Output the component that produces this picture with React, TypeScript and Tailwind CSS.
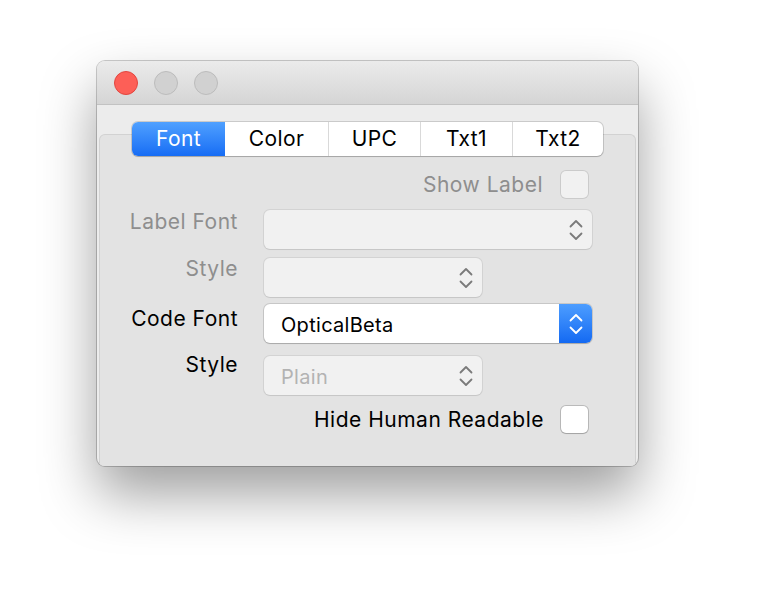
import React from 'react';

const font = { fontFamily: 'Inter, "Noto Sans", sans-serif' };

const Chevrons: React.FC<{ color: string }> = ({ color }) => (
  <svg width="16" height="24" viewBox="0 0 16 24" fill="none">
    <path d="M2.5 8.5 L8 3 L13.5 8.5" stroke={color} strokeWidth="1.8" strokeLinecap="round" strokeLinejoin="round" />
    <path d="M2.5 15.5 L8 21 L13.5 15.5" stroke={color} strokeWidth="1.8" strokeLinecap="round" strokeLinejoin="round" />
  </svg>
);

const Popup: React.FC<{ width: string; value?: string; active?: boolean }> = ({ width, value, active }) => {
  if (active) {
    return (
      <div className={`${width} h-[39px] flex rounded-[6px] bg-white shadow-[0_0_0_1px_rgba(0,0,0,0.12),0_1px_1px_rgba(0,0,0,0.15)] overflow-hidden`}>
        <div className="flex-1 flex items-center pl-[17px] pt-[2px] text-[20px] tracking-[0.3px] text-black">{value}</div>
        <div className="w-[33px] flex items-center justify-center bg-gradient-to-b from-[#4c9dff] to-[#1369f2]">
          <Chevrons color="#ffffff" />
        </div>
      </div>
    );
  }
  return (
    <div className={`${width} h-[39px] flex items-center rounded-[6px] bg-[#f1f1f1] shadow-[0_0_0_1px_rgba(0,0,0,0.07),0_1px_1px_rgba(0,0,0,0.06)]`}>
      <div className="flex-1 pl-[17px] pt-[2px] text-[20px] tracking-[0.3px] text-[#b3b3b3]">{value}</div>
      <div className="w-[33px] flex items-center justify-center">
        <Chevrons color="#7a7a7a" />
      </div>
    </div>
  );
};

const Checkbox: React.FC<{ disabled?: boolean }> = ({ disabled }) => (
  <div
    className={`w-[27px] h-[27px] rounded-[5px] ${
      disabled
        ? 'bg-[#f1f1f1] shadow-[0_0_0_1px_rgba(0,0,0,0.1)]'
        : 'bg-white shadow-[0_0_0_1px_rgba(0,0,0,0.18),0_1px_1px_rgba(0,0,0,0.12)]'
    }`}
  />
);

const tabs = [
  { name: 'Font', w: 'w-[93px]' },
  { name: 'Color', w: 'w-[103px]' },
  { name: 'UPC', w: 'w-[92px]' },
  { name: 'Txt1', w: 'w-[92px]' },
  { name: 'Txt2', w: 'w-[91px]' },
];

const FormRow: React.FC<{ label: string; dim?: boolean; children: React.ReactNode; className?: string; labelClass?: string }> = ({
  label,
  dim,
  children,
  className,
  labelClass,
}) => (
  <div className={`flex items-start ${className ?? ''}`}>
    <div
      className={`w-[138px] text-right text-[21px] tracking-[0.5px] leading-[24px] ${dim ? 'text-[#8e8e8e]' : 'text-black'} ${
        labelClass ?? ''
      }`}
    >
      {label}
    </div>
    <div className="ml-[26px]">{children}</div>
  </div>
);

export default function App() {
  return (
    <div className="w-[762px] h-[594px] bg-white pl-[97px] pt-[61px]" style={font}>
      <div className="w-[541px] h-[405px] rounded-[8px] bg-[#ececec] flex flex-col shadow-[0_0_0_1px_rgba(0,0,0,0.2),0_28px_55px_rgba(0,0,0,0.38)] overflow-hidden">
        {/* Title bar */}
        <div className="h-[44px] shrink-0 flex items-center gap-[16px] pl-[17px] bg-gradient-to-b from-[#ebebeb] to-[#d5d5d5] border-b border-[#c2c2c2]">
          <div className="w-[24px] h-[24px] rounded-full bg-[#fd5f57] border border-[#e2463f]" />
          <div className="w-[24px] h-[24px] rounded-full bg-[#d1d1d1] border border-[#bcbcbc]" />
          <div className="w-[24px] h-[24px] rounded-full bg-[#d1d1d1] border border-[#bcbcbc]" />
        </div>

        {/* Content */}
        <div className="flex-1 flex flex-col pt-[17px]">
          <div className="flex justify-center relative z-10">
            <div className="flex h-[34px] rounded-[6px] bg-white shadow-[0_0_0_1px_rgba(0,0,0,0.14),0_1px_1px_rgba(0,0,0,0.15)] overflow-hidden">
              {tabs.map((t, i) => (
                <div
                  key={t.name}
                  className={`${t.w} flex items-center justify-center text-[21px] tracking-[0.4px] ${
                    i === 0
                      ? 'bg-gradient-to-b from-[#4fa0ff] to-[#166cf4] text-white'
                      : 'text-black border-l border-[#d9d9d9]'
                  } ${i === 1 ? 'border-l-0' : ''}`}
                >
                  {t.name}
                </div>
              ))}
            </div>
          </div>

          <div className="flex-1 -mt-[22px] mx-[2px] rounded-t-[6px] bg-[#e3e3e3] border-t border-x border-[#d2d2d2] pt-[36px] flex flex-col">
            <div className="flex items-center justify-end pr-[47px]">
              <span className="text-[21px] tracking-[0.5px] leading-[27px] text-[#8e8e8e] mr-[18px]">Show Label</span>
              <Checkbox disabled />
            </div>

            <FormRow label="Label Font" dim className="mt-[12px]">
              <Popup width="w-[328px]" />
            </FormRow>
            <FormRow label="Style" dim className="mt-[9px]" labelClass="-mt-[1px]">
              <Popup width="w-[218px]" />
            </FormRow>
            <FormRow label="Code Font" className="mt-[10px]">
              <div className="-mt-[3px]">
                <Popup width="w-[328px]" value="OpticalBeta" active />
              </div>
            </FormRow>
            <FormRow label="Style" className="mt-[12px]" labelClass="-mt-[2px]">
              <div className="mt-[1px]">
                <Popup width="w-[218px]" value="Plain" />
              </div>
            </FormRow>

            <div className="flex items-center justify-end pr-[47px] mt-[11px]">
              <span className="text-[21px] tracking-[0.5px] leading-[27px] text-black mr-[17px]">Hide Human Readable</span>
              <Checkbox />
            </div>
          </div>
        </div>
      </div>
    </div>
  );
}
